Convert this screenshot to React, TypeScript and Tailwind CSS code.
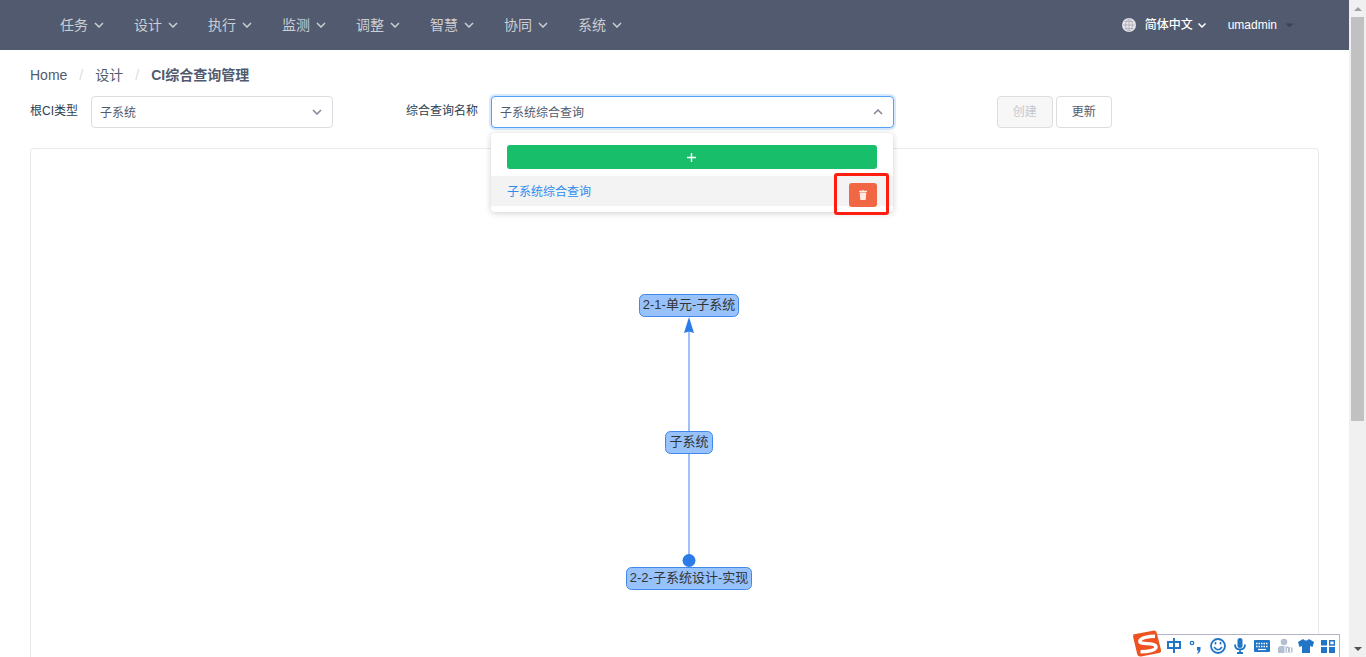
import { useState } from "react";
import type { ReactNode } from "react";

const menus = ["任务", "设计", "执行", "监测", "调整", "智慧", "协同", "系统"];

function Chevron({ className = "", up = false }: { className?: string; up?: boolean }) {
  return (
    <svg viewBox="0 0 10 6" className={`h-[6px] w-[10px] shrink-0 ${className}`} fill="none" stroke="currentColor" strokeWidth="1.5" aria-hidden="true">
      <path d={up ? "M1 5 5 1 9 5" : "M1 1 5 5 9 1"} />
    </svg>
  );
}

function Globe() {
  return (
    <svg viewBox="0 0 14 14" className="h-[14px] w-[14px]" aria-hidden="true">
      <circle cx="7" cy="7" r="7" fill="#e6e6ea" />
      <g fill="none" stroke="#aaa6b0" strokeWidth="0.8">
        <ellipse cx="7" cy="7" rx="3.4" ry="6" />
        <path d="M7 1v12M1 7h12M2.5 3.5h9M2.5 10.5h9" />
      </g>
    </svg>
  );
}

function Header() {
  return (
    <header className="flex h-[50px] shrink-0 items-center justify-between bg-[#515a6e] pl-[60px] pr-[55px]">
      <nav className="flex gap-[30px] text-sm text-[#cbced4]">
        {menus.map((name) => (
          <button key={name} type="button" className="flex items-center gap-[6px]">
            {name}
            <Chevron />
          </button>
        ))}
      </nav>
      <div className="flex items-center text-xs font-medium text-white">
        <button type="button" className="flex items-center">
          <Globe />
          <span className="ml-[9px] mr-[5px]">简体中文</span>
          <svg viewBox="0 0 8 5" className="h-[5px] w-[8px]" fill="none" stroke="currentColor" strokeWidth="1.5" aria-hidden="true">
            <path d="M.5.5 4 4 7.5.5" />
          </svg>
        </button>
        <button type="button" className="ml-[22px] flex items-center gap-[8px]">
          umadmin
          <svg viewBox="0 0 9 5" className="h-[5px] w-[9px]" aria-hidden="true">
            <path d="M.5.5h8l-4 4z" fill="#36475a" />
          </svg>
        </button>
      </div>
    </header>
  );
}

function Field({ id, label, options, open = false, children }: { id: string; label: string; options: string[]; open?: boolean; children?: ReactNode }) {
  return (
    <div className="flex items-start gap-[13px]">
      <label htmlFor={id} className="shrink-0 whitespace-nowrap leading-[30px] text-[#2c3e50]">
        {label}
      </label>
      <div className="relative min-w-0 flex-1">
        <select
          id={id}
          className={`block h-[32px] w-full appearance-none rounded border bg-white pl-[8px] pr-[24px] pt-[2px] outline-none ${open ? "border-[#57a3f3] shadow-[0_0_0_2px_rgba(45,140,240,0.2)]" : "border-[#dcdee2]"}`}
        >
          {options.map((o) => (
            <option key={o}>{o}</option>
          ))}
        </select>
        <Chevron up={open} className="pointer-events-none absolute right-[11px] top-[13px] text-[#808695]" />
        {children}
      </div>
    </div>
  );
}

function QueryMenu() {
  return (
    <div className="absolute left-0 right-px top-[37px] z-10 h-[79px] rounded bg-white pt-[12px] shadow-[0_1px_6px_rgba(0,0,0,0.2)]">
      <div className="px-[16px]">
        <button type="button" aria-label="新增" className="flex h-[24px] w-full items-center justify-center rounded-[3px] bg-[#19be6b] text-white">
          <svg viewBox="0 0 9 9" className="h-[9px] w-[9px]" stroke="currentColor" strokeWidth="1.4" aria-hidden="true">
            <path d="M4.5 0v9M0 4.5h9" />
          </svg>
        </button>
      </div>
      <div className="mt-[7px] flex h-[30px] items-start justify-between bg-[#f3f3f3] pl-[16px]">
        <span className="leading-[32px] text-[#2d8cf0]">子系统综合查询</span>
        <div className="-mt-[3px] mr-[4px] rounded-[3px] border-3 border-[#ff1e0f] pb-[5px] pl-[12px] pr-[9px] pt-[7px]">
          <button type="button" aria-label="删除" className="flex h-[24px] w-[28px] items-center justify-center rounded-[3px] bg-[#f16643]">
            <svg viewBox="0 0 8 10" className="h-[10px] w-[8px]" fill="#ffeae4" aria-hidden="true">
              <path d="M0 .8h2.5L3 .2h2l.5.6H8V2H0zM.7 2.6h6.6L6.8 9.3q-.1.6-.7.6H1.9q-.6 0-.7-.6z" />
            </svg>
          </button>
        </div>
      </div>
    </div>
  );
}

const nodes = [
  { x: 14, y: 1, w: 100, label: "2-1-单元-子系统" },
  { x: 40, y: 138, w: 48, label: "子系统" },
  { x: 1, y: 274, w: 126, label: "2-2-子系统设计-实现" },
];

function Diagram() {
  return (
    <svg viewBox="0 0 128 298" className="ml-[28px] mt-[144px] h-[298px] w-[128px]" role="img" aria-label="子系统">
      <path d="M64 30v108M64 160v108" stroke="#9fc1f7" strokeWidth="2" />
      <path d="M64 24 69 40 64 38.5 59 40z" fill="#2b7ce9" />
      <circle cx="64" cy="267.5" r="6.5" fill="#2b7ce9" />
      {nodes.map((n) => (
        <g key={n.label}>
          <rect x={n.x + 0.5} y={n.y + 0.5} width={n.w - 1} height="22" rx="5" fill="#97c2fc" stroke="#4288ea" />
          <text x={n.x + n.w / 2} y={n.y + 15} textAnchor="middle" fontSize="13" fill="#343434">
            {n.label}
          </text>
        </g>
      ))}
    </svg>
  );
}

function InputMethodBar() {
  return (
    <div className="fixed bottom-0 right-[26px] z-20 flex h-[23px] items-center border-r border-t border-[#b4b4c4] bg-white pl-[33px] pr-px">
      <svg viewBox="0 0 29 27" className="absolute left-0 bottom-0 h-[27px] w-[29px]" aria-hidden="true">
        <path d="M0 6.500Q0 4.500 2.500 4L20 .7Q23 0 23.800 3L28 20Q28.500 22.500 26 23L8 26.500Q5 27 4.200 24Z" fill="#ee5221" />
        <path d="M22 6.200C17 6.200 6.500 7.500 6.800 11.500c.3 3.500 16 .5 16.200 5.300.2 3.700-8 5-15.500 5" fill="none" stroke="#fff" strokeWidth="3.400" />
      </svg>
      <svg viewBox="0 0 172 20" className="h-[20px] w-[172px]" fill="none" stroke="#2175c6" aria-hidden="true">
        <path d="M2 6h12v6H2zM8 2v15" strokeWidth="2" />
        <circle cx="26" cy="7" r="1.700" strokeWidth="1.300" />
        <path d="M31 11h3.500v3q0 2.500-3 4v-1.500q1-.8 1-2H31z" fill="#2175c6" stroke="none" />
        <circle cx="52" cy="10" r="7" strokeWidth="1.800" />
        <path d="M48 11q4 5.500 8 0" strokeWidth="1.500" />
        <path d="M49.500 6v2.500M54.500 6v2.500" strokeWidth="1.600" />
        <rect x="71.500" y="2" width="5" height="10" rx="2.500" fill="#2175c6" stroke="none" />
        <path d="M69 8.500q0 5 5 5t5-5M74 14v3M71 17h6" strokeWidth="1.800" />
        <rect x="88" y="4" width="16" height="12" rx="1" fill="#2175c6" stroke="none" />
        <path d="M90 7.500h12M90 10.500h12" stroke="#fff" strokeWidth="1.500" strokeDasharray="1.500 1" />
        <path d="M92 13.500h8" stroke="#fff" strokeWidth="1.200" />
        <g fill="#b4bfd2" stroke="none">
          <circle cx="118" cy="6" r="3.300" />
          <path d="M112 17v-4q0-3 3-3h6v7z" />
          <path d="M119 10h4v1h4v6h-8z" stroke="#fff" />
        </g>
        <path d="M121.500 12v4M124.500 12v4" stroke="#fff" />
        <path d="m137 3-5 3 1.500 5 2.500-1v7h8v-7l2.500 1L148 6l-5-3q-3 3-6 0z" fill="#2175c6" stroke="none" />
        <path d="M155 4h6v5.500h-6zM155 11h6v6h-6zM163 11h6v6h-6z" fill="#2175c6" stroke="none" />
        <path d="M163.700 4.700h4.600v4.300h-4.600z" strokeWidth="1.400" />
      </svg>
    </div>
  );
}

function ScrollRail() {
  return (
    <div className="flex w-[17px] shrink-0 flex-col items-center bg-[#f0f0f0]" aria-hidden="true">
      <div className="flex h-[17px] items-center">
        <svg viewBox="0 0 8 4" className="h-[4px] w-[8px]">
          <path d="M0 4 4 0 8 4z" fill="#a0a0a0" />
        </svg>
      </div>
      <div className="min-h-0 w-[13px] flex-[404] bg-[#c1c1c1]" />
      <div className="flex-[219]" />
      <div className="flex h-[17px] items-center">
        <svg viewBox="0 0 8 4" className="h-[4px] w-[8px]">
          <path d="M0 0 4 4 8 0z" fill="#505050" />
        </svg>
      </div>
    </div>
  );
}

export default function App() {
  const [open] = useState(true);
  return (
    <div className="flex h-screen overflow-hidden bg-white font-['Liberation_Sans','Noto_Sans_CJK_SC',sans-serif] text-xs text-[#515a6e]">
      <div className="flex min-w-0 flex-1 flex-col overflow-hidden">
        <Header />
        <main className="flex min-h-0 flex-1 flex-col px-[30px] pt-[15px]">
          <nav aria-label="Breadcrumb" className="flex shrink-0 gap-[12px] text-sm">
            <a href="#home">Home</a>
            <span className="text-[#dcdee2]">/</span>
            <a href="#design">设计</a>
            <span className="text-[#dcdee2]">/</span>
            <span className="font-bold">CI综合查询管理</span>
          </nav>
          <div className="mt-[11px] grid shrink-0 grid-cols-[7fr_11fr_6fr]">
            <div className="pr-[73px]">
              <Field id="root-type" label="根CI类型" options={["子系统"]} />
            </div>
            <div className="pr-[103px]">
              <Field id="query-name" label="综合查询名称" options={["子系统综合查询"]} open={open}>
                {open && <QueryMenu />}
              </Field>
            </div>
            <div className="flex gap-[3px]">
              <button type="button" disabled className="h-[32px] w-[56px] rounded border border-[#dcdee2] bg-[#f7f7f7] text-[#c5c8ce]">
                创建
              </button>
              <button type="button" className="h-[32px] w-[56px] rounded border border-[#dcdee2] bg-white">
                更新
              </button>
            </div>
          </div>
          <section className="mt-[20px] flex min-h-0 flex-1 items-start justify-center rounded-t border border-b-0 border-[#e8eaec]">
            <Diagram />
          </section>
        </main>
      </div>
      <ScrollRail />
      <InputMethodBar />
    </div>
  );
}
